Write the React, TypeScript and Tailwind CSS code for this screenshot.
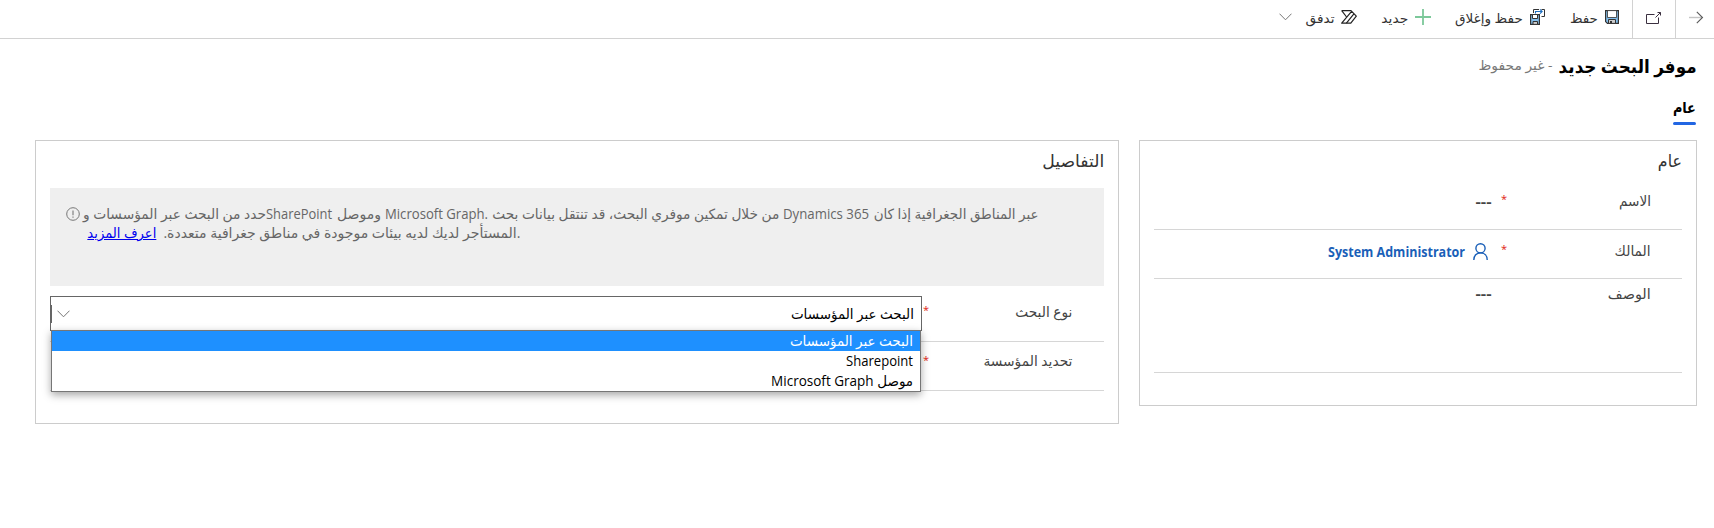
import { useLayoutEffect, useRef, type ReactNode } from "react";

/* Single line of text that always occupies the given width. */
function Fit({ w, className = "", dir = "rtl", children }: { w: number; className?: string; dir?: "rtl" | "ltr"; children: ReactNode }) {
  const ref = useRef<HTMLSpanElement>(null);
  useLayoutEffect(() => {
    const el = ref.current;
    if (el && el.offsetWidth > 0) el.style.transform = `scaleX(${w / el.getBoundingClientRect().width})`;
  }, [w]);
  return (
    <span dir={dir} className={`flex shrink-0 whitespace-nowrap ${className}`} style={{ width: w }}>
      <span ref={ref} className={dir === "rtl" ? "inline-block shrink-0 origin-right" : "inline-block shrink-0 origin-left"}>
        {children}
      </span>
    </span>
  );
}

function BackIcon() {
  return (
    <svg width="16" height="16" viewBox="0 0 16 16" fill="none">
      <path d="M1 8.5H14" stroke="#c4c4c4" strokeWidth="1.4" />
      <path d="M8.8 2.8L14.5 8.5L8.8 14.2" stroke="#5a5a5a" strokeWidth="1.1" />
    </svg>
  );
}

function PopOutIcon() {
  return (
    <svg width="16" height="14" viewBox="0 0 16 14" fill="none" stroke="#3b3040" strokeWidth="1">
      <path d="M8.5 3.5H.5V12.5H12.5V6.5" />
      <path d="M9.5 6.5L14.5 1.5M11.5 1.5H14.5V4.5" />
    </svg>
  );
}

function SaveIcon() {
  return (
    <svg width="14" height="14" viewBox="0 0 14 14">
      <path d="M.6 .6H13.4V13.4H2.4L.6 11.6Z" fill="#83beec" stroke="#333" strokeWidth="1.2" />
      <path d="M2.5 .6H11.5V7.5H2.5Z" fill="#fff" stroke="#333" strokeWidth=".8" />
      <path d="M3.5 9.5H10.5V13.4H3.5Z" fill="#ccc" stroke="#333" />
      <path d="M5 11H7V13H5Z" fill="#333" />
    </svg>
  );
}

function SaveCloseIcon() {
  return (
    <svg width="16" height="17" viewBox="0 0 16 17">
      <path d="M.6 6.6H9.4V16.4H.6Z" fill="#83beec" stroke="#333" strokeWidth="1.2" />
      <path d="M2.5 6.5H7.5V10.5H2.5Z" fill="#fff" stroke="#333" />
      <path d="M3 13.5H7.5V16.4H3Z" fill="#ccc" stroke="#333" />
      <path d="M3.5 5V1.5H9M11.5 1.5H14.5V8.5H11.5" fill="none" stroke="#333" />
      <path d="M5.5 5.5V3.5H12M10 1.3L12.2 3.5L10 5.7" fill="none" stroke="#1f6fc0" strokeWidth="1.1" />
    </svg>
  );
}

function PlusIcon() {
  return (
    <svg width="16" height="16" viewBox="0 0 16 16" stroke="#7cc89a" strokeWidth="1.8">
      <path d="M0 8H16M8 0V16" />
    </svg>
  );
}

function FlowIcon() {
  return (
    <svg width="16" height="14" viewBox="0 0 16 14" fill="none" stroke="#222" strokeWidth="1.2" strokeLinejoin="round">
      <path d="M.7 .7H10L15.3 6.2L9.8 13.2H.7L10.6 1.3" />
      <path d="M.7 .7L5.6 7M5.4 13.2L12.9 3.9" />
    </svg>
  );
}

function Chevron() {
  return (
    <svg width="13" height="8" viewBox="0 0 13 8" fill="none" stroke="#777">
      <path d="M.5 .7L6.5 6.8L12.5 .7" />
    </svg>
  );
}

function PersonIcon() {
  return (
    <svg className="mt-[2px]" width="15" height="17" viewBox="0 0 15 17" fill="none" stroke="#1a5fb8" strokeWidth="1.4">
      <circle cx="7.5" cy="5.3" r="4.6" />
      <path d="M.8 17C.8 12.6 3.6 9.9 7.5 9.9S14.2 12.6 14.2 17" />
    </svg>
  );
}

function InfoIcon() {
  return (
    <svg width="14" height="14" viewBox="0 0 14 14" fill="none" stroke="#777">
      <circle cx="7" cy="7" r="6.3" />
      <path d="M7 3.4V8.2M7 9.6V10.8" strokeWidth="1.1" />
    </svg>
  );
}

function Star() {
  return <span className="block text-[11px] leading-4 text-[#e0200e]">*</span>;
}

export default function App() {
  return (
    <div dir="rtl" className="h-[528px] w-[1714px] overflow-hidden bg-white font-['Open_Sans','Noto_Sans','DejaVu_Sans',sans-serif] text-[14px] leading-5 text-[#444]">
      <header className="flex h-[39px] items-center border-b border-[#d2d2d2] pb-[3px] text-[13px] text-[#333]">
        <div className="mt-[3px] flex h-[39px] w-[39px] items-center border-l border-[#d2d2d2] pb-[4px] pr-[10px]"><BackIcon /></div>
        <div className="mt-[3px] flex h-[39px] w-[43px] items-center justify-center border-l border-[#d2d2d2] pb-[3px]"><PopOutIcon /></div>
        <div className="mr-[13px] pb-[2px]"><SaveIcon /></div>
        <Fit w={28} className="mr-[7px]">حفظ</Fit>
        <div className="mr-[24px] pb-[2px]"><SaveCloseIcon /></div>
        <Fit w={68} className="mr-[7px]">حفظ وإغلاق</Fit>
        <div className="mr-[24px] pb-[2px]"><PlusIcon /></div>
        <Fit w={27} className="mr-[7px]">جديد</Fit>
        <div className="mr-[24px] pb-[2px]"><FlowIcon /></div>
        <Fit w={29} className="mr-[7px]">تدفق</Fit>
        <div className="mr-[13px] pb-[2px]"><Chevron /></div>
      </header>

      <div className="flex h-[54px] items-center pr-[17px]">
        <Fit w={138} className="text-[18px] font-semibold text-black">موفر البحث جديد</Fit>
        <Fit w={74} className="mr-[6px] pb-[2px] text-[13px] text-[#777]">- غير محفوظ</Fit>
      </div>

      <div className="flex h-[47px] pr-[18px]">
        <div className="flex h-[32px] w-[23px] flex-col justify-between">
          <Fit w={23} className="mt-[4px] text-[15px] font-semibold text-black">عام</Fit>
          <div className="h-[3px] rounded-full bg-[#2266e3]" />
        </div>
      </div>

      <main className="flex items-start gap-[20px] pr-[17px]">
        <section className="flex h-[266px] w-[558px] flex-col border border-[#cccccc] px-[14px]">
          <Fit w={24} className="h-[44px] items-center pb-[4px] text-[17px] text-[#333]">عام</Fit>
          <div className="flex h-[45px] border-b border-[#d6d6d6] pr-[31px] pt-[6px]">
            <div className="w-[144px]"><Fit w={32}>الاسم</Fit></div>
            <div className="w-[15px]"><Star /></div>
            <Fit w={16} className="pt-[1px] font-bold">---</Fit>
          </div>
          <div className="flex h-[49px] border-b border-[#d6d6d6] pr-[31px] pt-[11px]">
            <div className="w-[144px]"><Fit w={36}>المالك</Fit></div>
            <div className="w-[19px]"><Star /></div>
            <PersonIcon />
            <Fit w={137} dir="ltr" className="mr-[8px] pt-[1px] font-bold text-[#1a5fb8]">System Administrator</Fit>
          </div>
          <div className="flex h-[94px] border-b border-[#d6d6d6] pr-[31px] pt-[5px]">
            <div className="w-[159px]"><Fit w={43}>الوصف</Fit></div>
            <Fit w={16} className="font-bold">---</Fit>
          </div>
        </section>

        <section className="flex h-[284px] w-[1084px] flex-col border border-[#cccccc] px-[14px]">
          <Fit w={62} className="h-[47px] items-center pb-[8px] text-[17px] text-[#333]">التفاصيل</Fit>
          <div dir="ltr" className="flex h-[98px] gap-[3px] bg-[#efefef] pl-[16px] pt-[16px] text-[#666]">
            <div className="mt-[3px] w-[14px]"><InfoIcon /></div>
            <div className="flex flex-col">
              <div className="flex h-[19px]">
                <Fit w={183}>حدد من البحث عبر المؤسسات و</Fit>
                <Fit w={66} dir="ltr">SharePoint</Fit>
                <Fit w={44} className="ml-[5px]">وموصل</Fit>
                <Fit w={103} dir="ltr" className="ml-[4px]">Microsoft Graph.</Fit>
                <Fit w={287} className="ml-[4px]">من خلال تمكين موفري البحث، قد تنتقل بيانات بحث</Fit>
                <Fit w={86} dir="ltr" className="ml-[4px]">Dynamics 365</Fit>
                <Fit w={165} className="ml-[5px]">عبر المناطق الجغرافية إذا كان</Fit>
              </div>
              <div className="flex h-[19px] pl-[4px]">
                <Fit w={69} className="text-[#0000ee] underline">اعرف المزيد</Fit>
                <Fit w={357} className="ml-[7px]">.المستأجر لديك لديه بيئات موجودة في مناطق جغرافية متعددة.</Fit>
              </div>
            </div>
          </div>
          <div className="flex h-[56px] border-b border-[#d6d6d6] pr-[32px] pt-[10px]">
            <div className="w-[143px] pt-[6px]"><Fit w={57}>نوع البحث</Fit></div>
            <div className="w-[7px] pt-[6px]"><Star /></div>
            <div className="relative h-[35px] w-[872px]">
              <div className="flex h-[35px] items-center justify-between border border-[#666] bg-white pr-[7px] text-black">
                <Fit w={123}>البحث عبر المؤسسات</Fit>
                <div className="flex items-center gap-[5px]">
                  <Chevron />
                  <div className="h-[18px] w-px bg-[#666]" />
                </div>
              </div>
              <div className="absolute left-[1px] top-[34px] z-10 flex w-[870px] flex-col border border-[#767676] bg-white text-black shadow-[0_3px_8px_rgba(0,0,0,0.35)]">
                <div className="flex h-[20px] bg-[#1e90ff] pr-[7px] text-white"><Fit w={123}>البحث عبر المؤسسات</Fit></div>
                <div className="flex h-[20px] pr-[7px]"><Fit w={67} dir="ltr">Sharepoint</Fit></div>
                <div className="flex h-[20px] pr-[7px]"><Fit w={142}>موصل Microsoft Graph</Fit></div>
              </div>
            </div>
          </div>
          <div className="flex h-[49px] border-b border-[#d6d6d6] pr-[32px] pt-[9px]">
            <div className="w-[143px]"><Fit w={89}>تحديد المؤسسة</Fit></div>
            <div className="pt-[1px]"><Star /></div>
          </div>
        </section>
      </main>
    </div>
  );
}
